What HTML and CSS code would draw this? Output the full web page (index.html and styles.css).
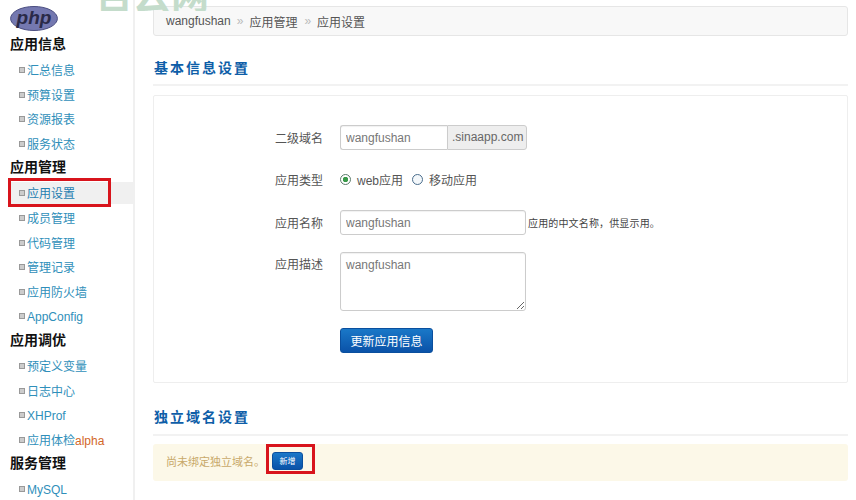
FILE: index.html
```html
<!DOCTYPE html>
<html lang="zh-CN">
<head>
<meta charset="utf-8">
<title>应用设置</title>
<link rel="stylesheet" href="styles.css">
</head>
<body>
<div class="watermark"><span class="watermark-text">百云网</span></div>
<div class="layout">
  <aside class="sidebar">
    <svg class="logo" viewBox="0 0 48 25" width="48" height="25" aria-label="php">
      <ellipse cx="24" cy="12.5" rx="23.4" ry="12" fill="#7478b0" stroke="#4a4d80" stroke-width="1"/>
      <text x="24" y="18" class="logo-text" text-anchor="middle">php</text>
    </svg>
    <h3 class="nav-head">应用信息</h3>
    <ul class="nav">
      <li><a>汇总信息</a></li>
      <li><a>预算设置</a></li>
      <li><a>资源报表</a></li>
      <li><a>服务状态</a></li>
    </ul>
    <h3 class="nav-head">应用管理</h3>
    <ul class="nav">
      <li class="active"><a>应用设置</a></li>
      <li><a>成员管理</a></li>
      <li><a>代码管理</a></li>
      <li><a>管理记录</a></li>
      <li><a>应用防火墙</a></li>
      <li><a>AppConfig</a></li>
    </ul>
    <h3 class="nav-head">应用调优</h3>
    <ul class="nav">
      <li><a>预定义变量</a></li>
      <li><a>日志中心</a></li>
      <li><a>XHProf</a></li>
      <li><a>应用体检<span class="alpha">alpha</span></a></li>
    </ul>
    <h3 class="nav-head">服务管理</h3>
    <ul class="nav">
      <li><a>MySQL</a></li>
    </ul>
  </aside>
  <main class="main">
    <div class="breadcrumb">
      <span>wangfushan</span><span class="sep">»</span><span>应用管理</span><span class="sep">»</span><span>应用设置</span>
    </div>
    <h2 class="section-title first">基本信息设置</h2>
    <section class="panel">
      <div class="row row-domain">
        <label class="label">二级域名</label>
        <div class="input-group">
          <input class="input input-short" type="text" value="wangfushan">
          <span class="addon">.sinaapp.com</span>
        </div>
      </div>
      <div class="row row-type">
        <label class="label">应用类型</label>
        <label class="radio"><input type="radio" name="t" checked>web应用</label>
        <label class="radio"><input type="radio" name="t">移动应用</label>
      </div>
      <div class="row row-name">
        <label class="label">应用名称</label>
        <input class="input input-long" type="text" value="wangfushan">
        <span class="hint">应用的中文名称，供显示用。</span>
      </div>
      <div class="row row-desc">
        <label class="label">应用描述</label>
        <textarea class="textarea">wangfushan</textarea>
      </div>
      <div class="row row-submit">
        <button class="btn btn-primary" type="button">更新应用信息</button>
      </div>
    </section>
    <h2 class="section-title second">独立域名设置</h2>
    <div class="alert">
      <span>尚未绑定独立域名。</span>
      <span class="add-wrap"><button class="btn btn-small" type="button">新增</button></span>
    </div>
  </main>
</div>
</body>
</html>
```
FILE: styles.css
```css
*, *::before, *::after { box-sizing: border-box; }
html, body { margin: 0; height: 500px; overflow: hidden; }
body {
  background: #fff;
  color: #333;
  font-family: "Liberation Sans", "Noto Sans CJK SC", sans-serif;
  font-size: 12px;
}
.watermark {
  position: absolute;
  left: 95px;
  top: 0;
  height: 11px;
  overflow: hidden;
  z-index: 2;
}
.watermark-text {
  display: block;
  margin-top: -28px;
  font-family: "Noto Sans CJK SC", sans-serif;
  font-size: 38px;
  font-weight: 700;
  line-height: 41px;
  color: #c4dccb;
}
.layout { display: grid; grid-template-columns: 135px 1fr; height: 500px; overflow: hidden; }
.sidebar {
  border-right: 2px solid #f0f0f0;
  padding-top: 6px;
  display: flex;
  flex-direction: column;
  align-items: stretch;
}
.logo { display: block; margin: 0 0 0 10px; flex: none; }
.logo-text {
  font-family: "Liberation Sans", sans-serif;
  font-size: 19px;
  font-weight: 700;
  font-style: italic;
  fill: #2a2a48;
}
.nav-head {
  margin: 0;
  height: 25px;
  flex: none;
  padding-left: 10px;
  font-size: 14px;
  line-height: 25px;
  font-weight: 700;
  color: #111;
  font-family: "Noto Sans CJK SC", sans-serif;
}
.nav { list-style: none; margin: 0; padding: 0; flex: none; }
.nav li {
  position: relative;
  height: 24.6px;
  padding: 6px 0 0 27px;
  line-height: 18.6px;
  color: #2f8fba;
}
.nav li::before {
  content: "";
  position: absolute;
  left: 19px;
  top: 11px;
  width: 6px;
  height: 6px;
  background: #ccc;
  border: 1px solid #999;
}
.nav li.active {
  background: linear-gradient(transparent 3px, #f0f0f0 3px);
  margin-left: 10px;
  padding-left: 17px;
  color: #1f7eb0;
}
.nav li.active::before { left: 9px; }
.nav li.active::after {
  content: "";
  position: absolute;
  left: -2px;
  top: -1px;
  width: 103px;
  height: 29px;
  border: 3px solid #d8141c;
}
.alpha { color: #d2672a; }
.main { padding: 6px 8px 0 18px; min-width: 0; }
.breadcrumb {
  height: 30px;
  display: flex;
  align-items: center;
  padding-left: 12px;
  background: #f8f8f8;
  border: 1px solid #e6e6e6;
  border-radius: 3px;
  color: #555;
  font-size: 12px;
}
.sep { color: #bbb; margin: 0 6px; }
.breadcrumb .sep + span + .sep { margin-left: 7px; }
.section-title {
  margin: 0;
  border-bottom: 2px solid #f2f2f2;
  color: #0e5ea8;
  font-family: "Noto Sans CJK SC", sans-serif;
  font-size: 14px;
  font-weight: 700;
  letter-spacing: 2px;
  line-height: 20px;
  padding-left: 1px;
}
.section-title.first { margin-top: 21px; height: 29px; }
.section-title.second { margin-top: 23px; height: 30px; }
.panel {
  margin-top: 9px;
  height: 288px;
  border: 1px solid #eee;
  border-radius: 2px;
  padding: 29px 0 0 121px;
}
.row { display: flex; align-items: center; }
.row-type { margin-top: 17px; height: 25px; }
.row-name { margin-top: 18px; }
.row-desc { margin-top: 17px; align-items: flex-start; }
.row-submit { margin-top: 17px; padding-left: 65px; }
.label { width: 65px; flex: none; color: #555; font-size: 12px; }
.row-desc .label { padding-top: 3px; }
.input-group { display: flex; }
.input, .textarea {
  border: 1px solid #ccc;
  border-radius: 3px;
  background: #fff;
  color: #777;
  font-family: "Liberation Sans", "Noto Sans CJK SC", sans-serif;
  font-size: 12px;
  height: 25px;
  padding: 0 5px;
  margin: 0;
  box-shadow: inset 0 1px 1px rgba(0,0,0,.06);
}
.input-short { width: 107px; border-radius: 3px 0 0 3px; border-right: 0; }
.addon {
  width: 80px;
  height: 25px;
  line-height: 23px;
  background: #eee;
  border: 1px solid #ccc;
  border-radius: 0 3px 3px 0;
  padding-left: 4px;
  color: #666;
  white-space: nowrap;
  font-size: 12px;
}
.input-long { width: 186px; }
.hint { margin-left: 2px; font-size: 10px; letter-spacing: .15px; color: #444; }
.textarea { width: 186px; height: 59px; padding: 5px; display: block; }
.radio { display: inline-flex; align-items: center; color: #555; margin-right: 9px; }
.radio input {
  appearance: none;
  width: 11px;
  height: 11px;
  margin: 0 6px 0 0;
  border: 1px solid #4a6d8c;
  border-radius: 50%;
  background: #f4f8fb;
}
.radio input:checked {
  border-color: #5a7a6a;
  background: radial-gradient(circle, #3a9a4a 0 2.5px, #fff 3px);
}
.btn {
  border: 1px solid #0a4f9e;
  border-radius: 3px;
  color: #fff;
  background: linear-gradient(#1a78c8, #0a52a8);
  font-family: "Noto Sans CJK SC", sans-serif;
  padding: 0;
  margin: 0;
}
.btn-primary { width: 93px; height: 25px; font-size: 12px; }
.alert {
  margin-top: 8px;
  height: 37px;
  background: #fcf8e8;
  border-radius: 3px;
  padding: 0 0 4px 13px;
  display: flex;
  align-items: center;
  color: #c8a96a;
  font-size: 11px;
}
.add-wrap { position: relative; display: inline-flex; margin-left: 7px; }
.add-wrap::after {
  content: "";
  position: absolute;
  left: -6px;
  top: -8px;
  width: 49px;
  height: 30px;
  border: 3px solid #d8141c;
}
.btn-small { width: 31px; height: 18px; font-size: 8px; }
```
